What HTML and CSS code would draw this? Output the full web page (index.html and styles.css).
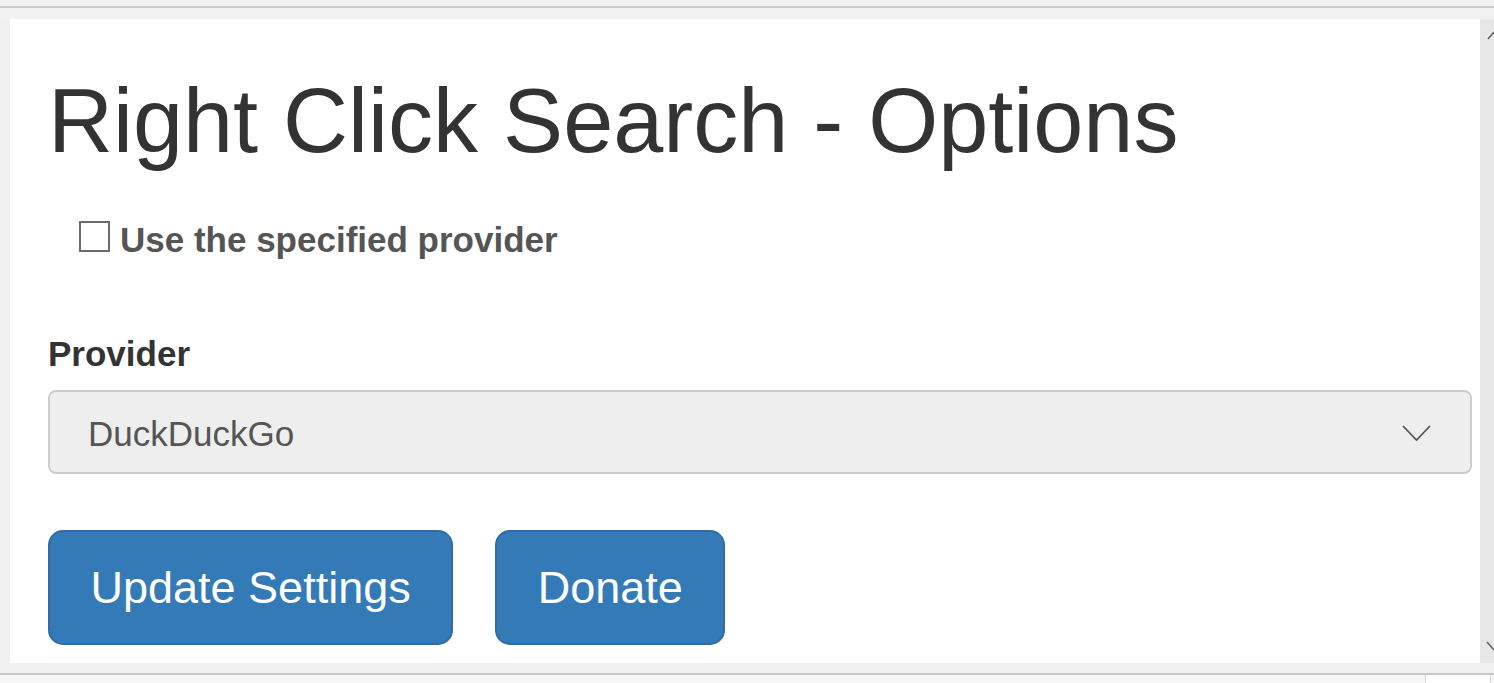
FILE: index.html
```html
<!DOCTYPE html>
<html lang="en">
<head>
<meta charset="utf-8">
<title>Right Click Search - Options</title>
<link rel="stylesheet" href="styles.css">
</head>
<body>
<div class="topbar"><div class="topline"></div></div>
<div class="main">
  <div class="gutter"></div>
  <div class="panel">
    <h1 class="title">Right Click Search - Options</h1>
    <label class="check-row">
      <span class="checkbox"></span>
      <span class="check-text">Use the specified provider</span>
    </label>
    <div class="field-label">Provider</div>
    <div class="select">
      <span class="select-text">DuckDuckGo</span>
      <svg class="chevron" width="29" height="16" viewBox="0 0 29 16"><polyline points="1,1 14.5,15 28,1" fill="none" stroke="#555" stroke-width="1.8"/></svg>
    </div>
    <div class="actions">
      <button class="btn">Update Settings</button>
      <button class="btn">Donate</button>
    </div>
  </div>
  <div class="scrollbar">
    <svg class="sb-up" width="14" height="12" viewBox="0 0 14 12"><line x1="8" y1="10" x2="14" y2="3" stroke="#666" stroke-width="1.6"/></svg>
    <svg class="sb-down" width="14" height="12" viewBox="0 0 14 12"><line x1="7" y1="2" x2="14" y2="10" stroke="#666" stroke-width="1.6"/></svg>
  </div>
</div>
<div class="bottombar">
  <div class="bottomline"></div>
  <div class="status">
    <div class="status-fill"></div>
    <div class="status-box"></div>
  </div>
</div>
</body>
</html>
```

FILE: styles.css
```css
html, body {
  margin: 0;
  padding: 0;
}
body {
  width: 1494px;
  height: 683px;
  overflow: hidden;
  background: #f0f0f0;
  font-family: "Liberation Sans", Arial, sans-serif;
  display: flex;
  flex-direction: column;
}
.topbar {
  height: 19px;
  background: #f2f2f2;
  flex: none;
  display: flex;
  flex-direction: column;
}
.topline {
  margin-top: 6px;
  height: 2px;
  background: #cbcbcb;
}
.main {
  height: 644px;
  flex: none;
  display: flex;
}
.gutter {
  width: 10px;
  background: #f0f0f0;
  flex: none;
}
.panel {
  flex: 1;
  background: #ffffff;
  padding: 0 8px 0 38px;
  display: flex;
  flex-direction: column;
  align-items: flex-start;
}
.title {
  margin: 53px 0 0 0;
  font-size: 90px;
  font-weight: 400;
  line-height: 99px;
  color: #333333;
  white-space: nowrap;
}
.check-row {
  margin-top: 44px;
  margin-left: 31px;
  display: flex;
  align-items: center;
  height: 50px;
}
.checkbox {
  width: 27px;
  height: 27px;
  border: 2px solid #6b6b6b;
  background: #fff;
  margin-right: 10px;
  margin-top: -8px;
  flex: none;
}
.check-text {
  font-size: 35px;
  font-weight: 700;
  color: #555555;
  line-height: 50px;
}
.field-label {
  margin-top: 64px;
  font-size: 35px;
  font-weight: 700;
  line-height: 50px;
  color: #333333;
}
.select {
  margin-top: 11px;
  align-self: stretch;
  height: 80px;
  border: 2px solid #cccccc;
  border-radius: 8px;
  background: #eeeeee;
  display: flex;
  align-items: center;
  justify-content: space-between;
  padding: 0 39px 0 38px;
}
.select-text {
  font-size: 35px;
  color: #555555;
  padding-top: 3px;
}
.chevron {
  display: block;
  margin-top: 2px;
}
.actions {
  margin-top: 56px;
  display: flex;
  gap: 42px;
}
.btn {
  font-family: "Liberation Sans", Arial, sans-serif;
  font-size: 45px;
  line-height: 60px;
  height: 115px;
  padding: 0 40.5px;
  color: #ffffff;
  background: #337ab7;
  border: 2px solid #2e6da4;
  border-radius: 15px;
  cursor: pointer;
}
.scrollbar {
  width: 14px;
  flex: none;
  background: #e7e7e7;
  display: flex;
  flex-direction: column;
  justify-content: space-between;
  padding: 10px 0 11px 0;
}
.sb-up, .sb-down {
  display: block;
}
.bottombar {
  flex: 1;
  display: flex;
  flex-direction: column;
  background: #f0f0f0;
}
.bottomline {
  margin-top: 10px;
  height: 2px;
  background: #c8c8c8;
  flex: none;
}
.status {
  flex: 1;
  display: flex;
  background: #f7f7f7;
}
.status-fill {
  flex: 1;
}
.status-box {
  width: 64px;
  background: #ffffff;
  border-left: 1px solid #d8d8d8;
  border-right: 1px solid #d8d8d8;
  margin-right: 3px;
}
```
